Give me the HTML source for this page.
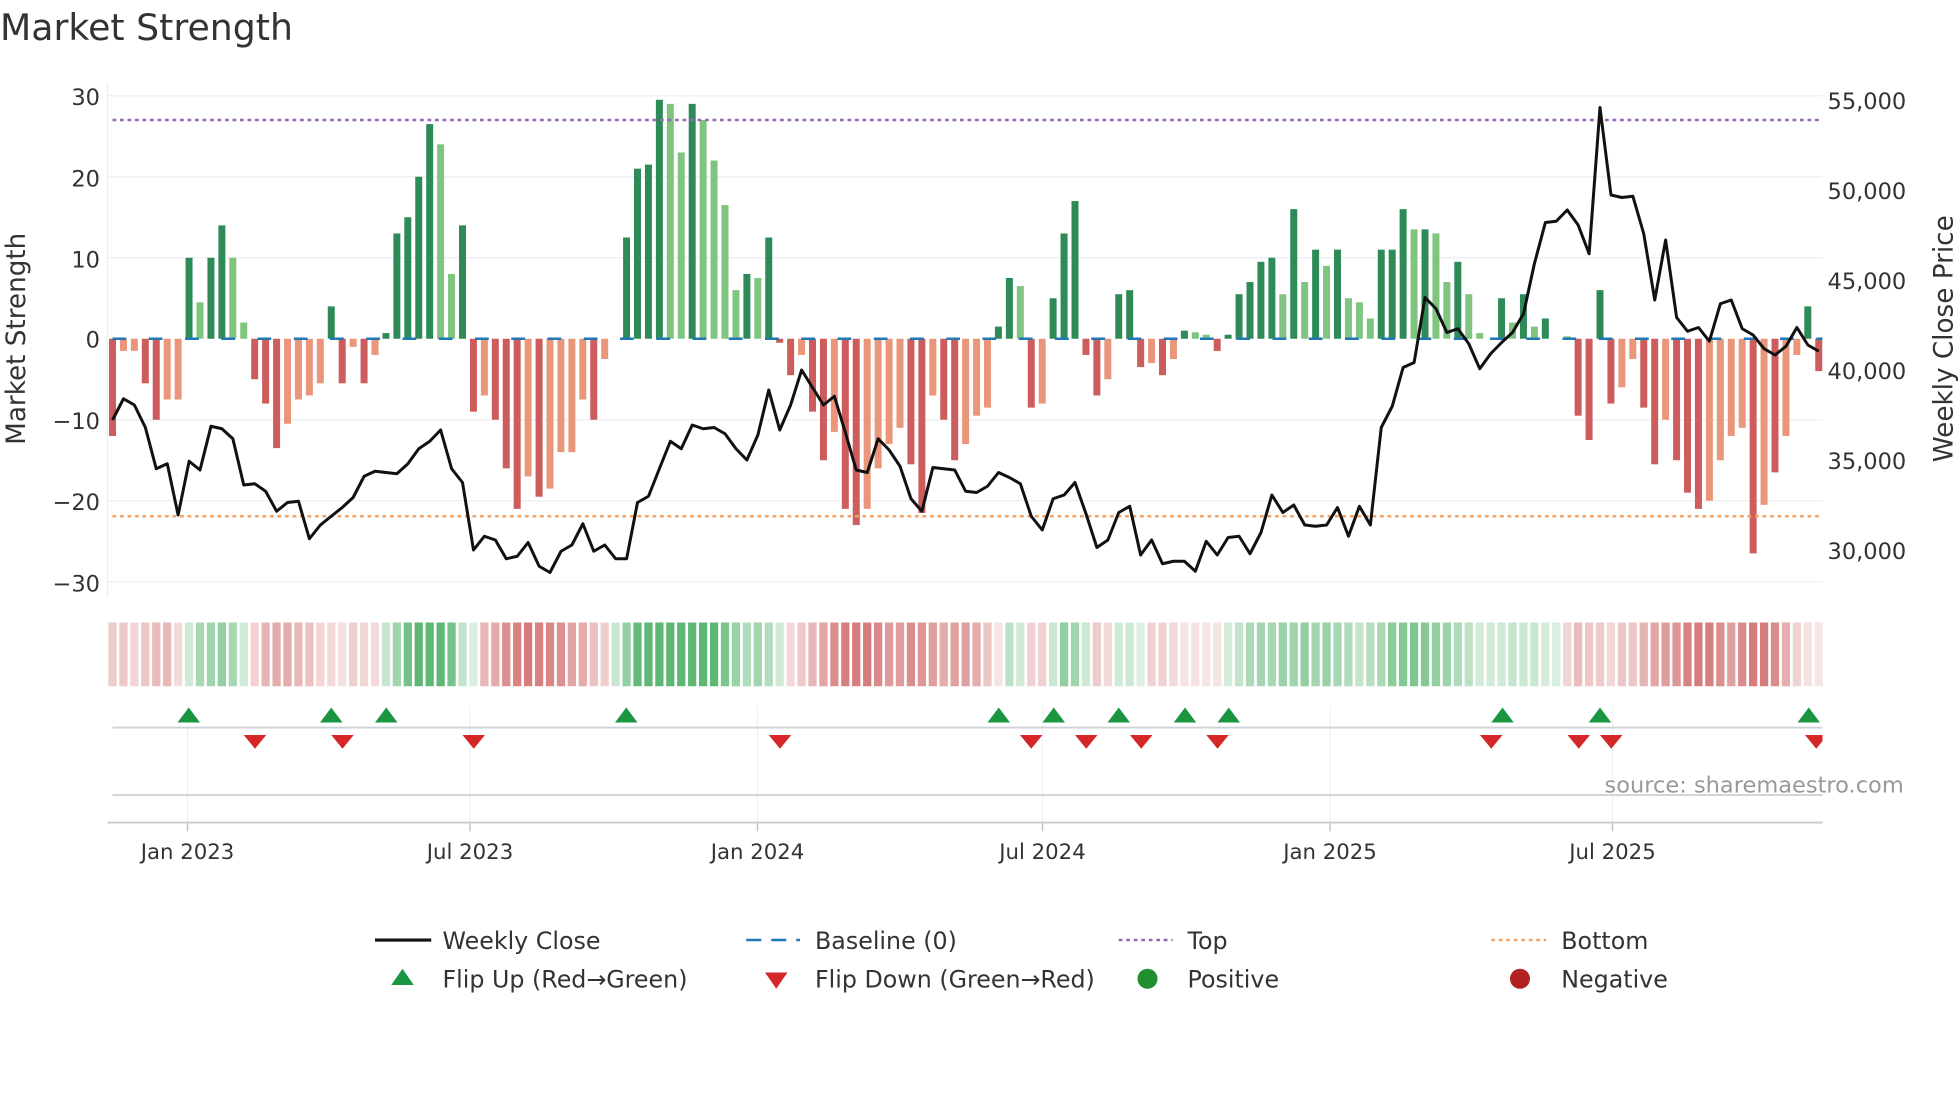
<!DOCTYPE html>
<html><head><meta charset="utf-8"><style>
html,body{margin:0;padding:0;background:#fff;}
svg{display:block;font-family:"DejaVu Sans","Liberation Sans",sans-serif;}
</style></head><body>
<svg id="s" width="1960" height="1102" viewBox="0 0 1568 881.6" xmlns="http://www.w3.org/2000/svg">
<rect width="1568" height="882" fill="#fff"/>
<text x="0" y="32" font-size="29" fill="#333">Market Strength</text>
<g id="grid"></g>
<g id="bars"></g>
<line x1="90" x2="1458" y1="96" y2="96" stroke="#9467bd" stroke-width="2" stroke-dasharray="3,3"/>
<line x1="90" x2="1458" y1="413" y2="413" stroke="#f4a261" stroke-width="2" stroke-dasharray="3,3"/>
<line x1="90" x2="1458" y1="271" y2="271" stroke="#1f77b4" stroke-width="2" stroke-dasharray="11,18"/>
<polyline id="price" fill="none" stroke="#111" stroke-width="2.4" stroke-linejoin="round"/>
<g id="strip"></g>
<g id="flips"></g>
<g font-size="18" fill="#333" text-anchor="end">
<text x="80" y="84">30</text><text x="80" y="149">20</text><text x="80" y="214">10</text><text x="80" y="278">0</text><text x="80" y="343">−10</text><text x="80" y="408">−20</text><text x="80" y="473">−30</text>
</g>
<g font-size="18" fill="#333">
<text x="1462" y="87">55,000</text><text x="1462" y="159">50,000</text><text x="1462" y="231">45,000</text><text x="1462" y="303">40,000</text><text x="1462" y="375">35,000</text><text x="1462" y="447">30,000</text>
</g>
<text transform="translate(20,271) rotate(-90)" font-size="21" fill="#333" text-anchor="middle">Market Strength</text>
<text transform="translate(1562,271) rotate(-90)" font-size="21" fill="#333" text-anchor="middle">Weekly Close Price</text>
<text x="1523" y="634" font-size="18" fill="#999" text-anchor="end">source: sharemaestro.com</text>
<g font-size="17" fill="#333" text-anchor="middle">
<text x="150" y="687">Jan 2023</text><text x="376" y="687">Jul 2023</text><text x="606" y="687">Jan 2024</text><text x="834" y="687">Jul 2024</text><text x="1064" y="687">Jan 2025</text><text x="1290" y="687">Jul 2025</text>
</g>
<g font-size="19" fill="#333">
<line x1="300" x2="345" y1="752" y2="752" stroke="#111" stroke-width="2.5"/><text x="354" y="759">Weekly Close</text>
<line x1="597" x2="640" y1="752" y2="752" stroke="#1f77b4" stroke-width="2" stroke-dasharray="12,8"/><text x="652" y="759">Baseline (0)</text>
<line x1="895" x2="938" y1="752" y2="752" stroke="#9467bd" stroke-width="2" stroke-dasharray="3,3"/><text x="950" y="759">Top</text>
<line x1="1193" x2="1237" y1="752" y2="752" stroke="#f4a261" stroke-width="2" stroke-dasharray="3,3"/><text x="1249" y="759">Bottom</text>
<polygon points="313,788 331,788 322,775" fill="#1a9641"/><text x="354" y="790">Flip Up (Red→Green)</text>
<polygon points="612,778 630,778 621,791" fill="#d62728"/><text x="652" y="790">Flip Down (Green→Red)</text>
<circle cx="918" cy="783" r="8" fill="#1f8f2f"/><text x="950" y="790">Positive</text>
<circle cx="1216" cy="783" r="8" fill="#b22222"/><text x="1249" y="790">Negative</text>
</g>
</svg>
<script>
var NS="http://www.w3.org/2000/svg";
function el(p,t,a){var e=document.createElementNS(NS,t);for(var k in a)e.setAttribute(k,a[k]);document.getElementById(p).appendChild(e);return e;}
var V=[[-12,1],[-1.5,0],[-1.5,0],[-5.5,1],[-10,1],[-7.5,0],[-7.5,0],[10,1],[4.5,0],[10,1],[14,1],[10,0],[2,0],[-5,1],[-8,1],[-13.5,1],[-10.5,0],[-7.5,0],[-7,0],[-5.5,0],[4,1],[-5.5,1],[-1,0],[-5.5,1],[-2,0],[0.7,1],[13,1],[15,1],[20,1],[26.5,1],[24,0],[8,0],[14,1],[-9,1],[-7,0],[-10,1],[-16,1],[-21,1],[-17,0],[-19.5,1],[-18.5,0],[-14,0],[-14,0],[-7.5,0],[-10,1],[-2.5,0],[0,0],[12.5,1],[21,1],[21.5,1],[29.5,1],[29,0],[23,0],[29,1],[27,0],[22,0],[16.5,0],[6,0],[8,1],[7.5,0],[12.5,1],[-0.5,1],[-4.5,1],[-2,0],[-9,1],[-15,1],[-11.5,0],[-21,1],[-23,1],[-21,0],[-16,0],[-13,0],[-11,0],[-15.5,1],[-21.5,1],[-7,0],[-10,1],[-15,1],[-13,0],[-9.5,0],[-8.5,0],[1.5,1],[7.5,1],[6.5,0],[-8.5,1],[-8,0],[5,1],[13,1],[17,1],[-2,1],[-7,1],[-5,0],[5.5,1],[6,1],[-3.5,1],[-3,0],[-4.5,1],[-2.5,0],[1,1],[0.8,0],[0.5,0],[-1.5,1],[0.5,1],[5.5,1],[7,1],[9.5,1],[10,1],[5.5,0],[16,1],[7,0],[11,1],[9,0],[11,1],[5,0],[4.5,0],[2.5,0],[11,1],[11,1],[16,1],[13.5,0],[13.5,1],[13,0],[7,0],[9.5,1],[5.5,0],[0.7,0],[0,0],[5,1],[2,0],[5.5,1],[1.5,0],[2.5,1],[0,0],[0.3,0],[-9.5,1],[-12.5,1],[6,1],[-8,1],[-6,0],[-2.5,0],[-8.5,1],[-15.5,1],[-10,0],[-15,1],[-19,1],[-21,1],[-20,0],[-15,0],[-12,0],[-11,0],[-26.5,1],[-20.5,0],[-16.5,1],[-12,0],[-2,0],[4,1],[-4,1]];
var P=[336,319,324,342,375,371,412,369,376,341,343,351,388,387,393,409,402,401,431,420,413,406,398,381,377,378,379,371,359,353,344,375,386,440,429,432,447,445,434,453,458,441,436,419,441,436,447,447,402,397,375,353,359,340,343,342,347,359,368,348,312,344,324,296,310,324,317,346,376,378,351,360,373,399,409,374,375,376,393,394,389,378,382,387,413,424,399,396,386,411,438,432,410,405,444,432,451,449,449,457,433,444,430,429,443,426,396,410,404,420,421,420,406,429,405,420,342,325,294,290,238,247,266,263,275,295,283,274,266,251,211,178,177,168,180,203,86,156,158,157,187,240,192,254,265,262,273,243,240,263,268,279,284,277,262,276,281];
var N=V.length,step=(1455-90)/(N-1);
function X(i){return 90+i*step;}
[30,20,10,-10,-20,-30].forEach(function(v){var y=271-v*6.48;el("grid","line",{x1:86,x2:1458,y1:y,y2:y,stroke:"#eceef2","stroke-width":1});});
el("grid","line",{x1:86,x2:86,y1:66,y2:478,stroke:"#eceef2","stroke-width":1});
[150,376,606,834,1064,1290].forEach(function(x){el("grid","line",{x1:x,x2:x,y1:565,y2:658,stroke:"#eef0f3","stroke-width":1});el("grid","line",{x1:x,x2:x,y1:658,y2:665,stroke:"#bbb","stroke-width":1});});
el("grid","line",{x1:90,x2:1458,y1:582,y2:582,stroke:"#d0d3d8","stroke-width":1.5});
el("grid","line",{x1:90,x2:1458,y1:636,y2:636,stroke:"#d0d3d8","stroke-width":1.5});
el("grid","line",{x1:86,x2:1458,y1:658,y2:658,stroke:"#c8cbd0","stroke-width":1.5});
V.forEach(function(d,i){var v=d[0],h=Math.abs(v)*6.48;if(h<0.5)return;var c=v>0?(d[1]?"#2e8b57":"#7fc47f"):(d[1]?"#cd5c5c":"#e9967a");
el("bars","rect",{x:X(i)-2.8,y:v>0?271-h:271,width:5.6,height:h,fill:c});});
document.getElementById("price").setAttribute("points",P.map(function(y,i){return X(i).toFixed(1)+","+y;}).join(" "));
var sign=1;
V.forEach(function(d,i){var s=0;for(var k=Math.max(0,i-1);k<=Math.min(N-1,i+1);k++)s+=V[k][0];s/=3;if(Math.abs(s)>0.8)sign=s>0?1:-1;var a=Math.min(0.75,0.15+Math.abs(s)/32);
var c=sign>0?"rgba(40,160,70,"+a+")":"rgba(200,80,80,"+a+")";
el("strip","rect",{x:X(i)-3.3,y:498,width:6.6,height:51,fill:c});});
[151,265,309,501,799,843,895,948,983,1202,1280,1447].forEach(function(x){el("flips","polygon",{points:(x-9)+",578 "+(x+9)+",578 "+x+",566",fill:"#1a9641"});});
[204,274,379,624,825,869,913,974,1193,1263,1289,1453].forEach(function(x){el("flips","polygon",{points:(x-9)+",588 "+(x+9)+",588 "+x+",599",fill:"#d62728"});});
el("flips","rect",{x:1458,y:585,width:20,height:20,fill:"#fff"});
</script>
</body></html>
